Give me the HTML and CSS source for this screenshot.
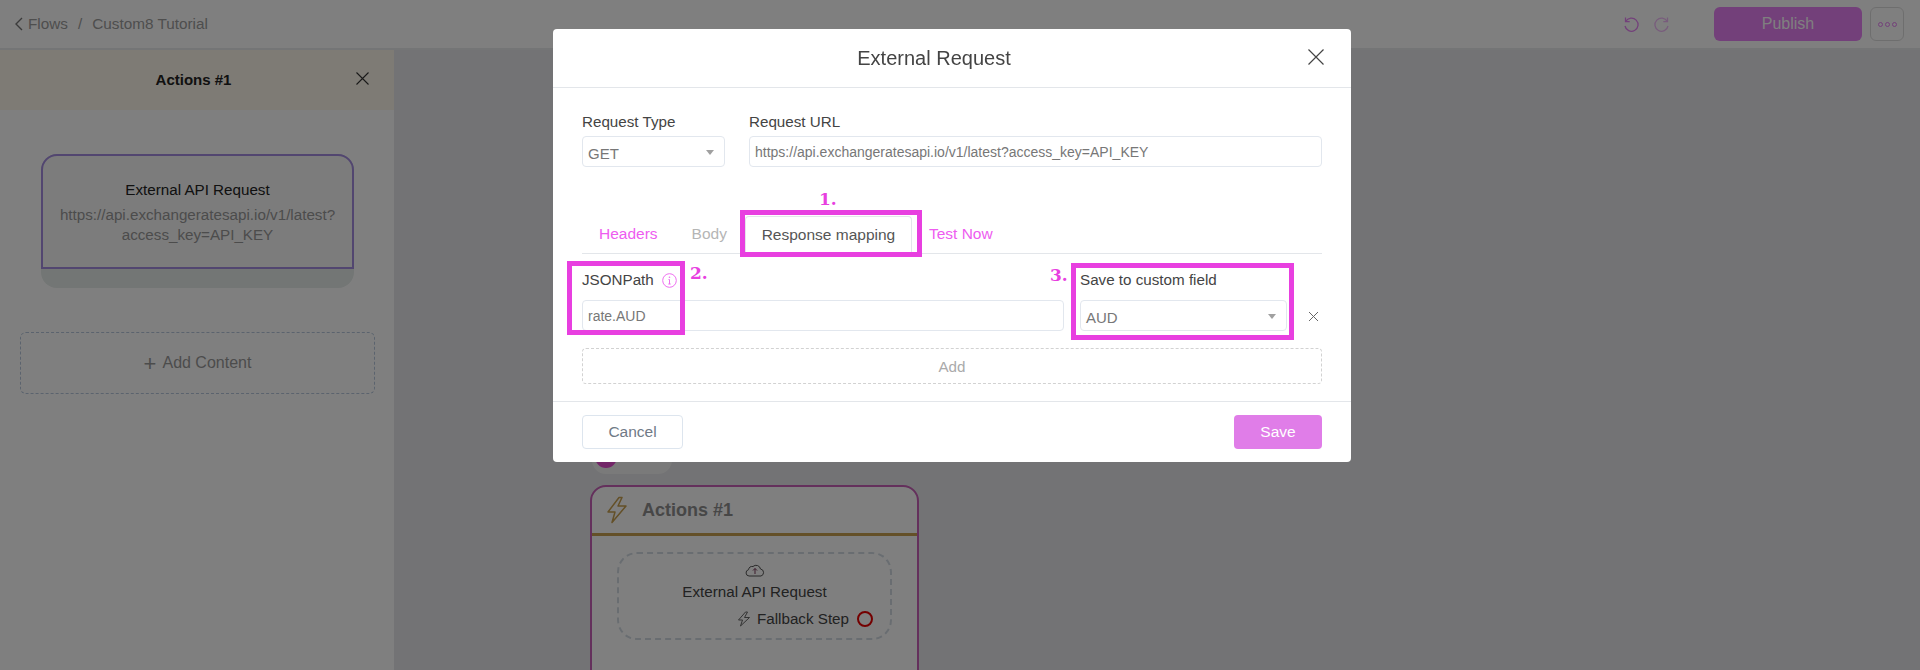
FILE: index.html
```html
<!DOCTYPE html>
<html lang="en">
<head>
<meta charset="utf-8">
<title>External Request</title>
<link rel="stylesheet" href="styles.css">
</head>
<body>
<div class="app">
  <header class="topbar">
    <nav class="crumbs">
      <svg class="chev" width="10" height="14" viewBox="0 0 10 14"><path d="M8 1 2 7l6 6" fill="none" stroke="currentColor" stroke-width="1.4"/></svg>
      <span>Flows</span><span class="sep">/</span><span>Custom8 Tutorial</span>
    </nav>
    <div class="top-actions">
      <svg class="undo" width="18" height="18" viewBox="0 0 18 18"><path d="M3.5 2.5v4.2h4.2M3.7 6.5A6.6 6.6 0 1 1 3 11" fill="none" stroke="currentColor" stroke-width="1.3"/></svg>
      <svg class="redo" width="18" height="18" viewBox="0 0 18 18"><path d="M14.5 2.5v4.2h-4.2M14.3 6.5A6.6 6.6 0 1 0 15 11" fill="none" stroke="currentColor" stroke-width="1.3"/></svg>
      <button class="publish">Publish</button>
      <button class="more"><i></i><i></i><i></i></button>
    </div>
  </header>
  <div class="workspace">
    <aside class="panel">
      <div class="panel-head">
        <strong>Actions #1</strong>
        <svg class="panel-x" width="13" height="13" viewBox="0 0 13 13"><path d="M.5.5l12 12M12.500.5l-12 12" stroke="currentColor" stroke-width="1.100"/></svg>
      </div>
      <div class="panel-body">
        <div class="card-wrap">
          <div class="card">
            <div class="card-title">External API Request</div>
            <div class="card-url">https://api.exchangeratesapi.io/v1/latest?<br>access_key=API_KEY</div>
          </div>
        </div>
        <div class="add-content"><span class="plus">+</span> Add Content</div>
      </div>
    </aside>
    <main class="canvas">
      <div class="pill"><b></b></div>
      <section class="node">
        <div class="node-head">
          <svg width="22" height="28" viewBox="0 0 22 28"><path d="M13 1.500 2 16h7l-3 10.500L20 10h-8l4-8.500z" fill="none" stroke="#c8a050" stroke-width="1.500" stroke-linejoin="round"/></svg>
          <strong>Actions #1</strong>
        </div>
        <div class="node-inner">
          <svg class="cloud" width="20" height="14" viewBox="0 0 20 14"><path d="M5 13H4a3.200 3.200 0 0 1-.5-6.300A4 4 0 0 1 8 3.500 4.500 4.500 0 0 1 15.500 6a3.600 3.600 0 0 1 .5 7z" fill="none" stroke="#555" stroke-width="1"/><path d="M10 11V5.500M8 7.500l2-2 2 2" fill="none" stroke="#7a3a5a" stroke-width="1"/></svg>
          <div class="node-text">External API Request</div>
          <div class="fallback">
            <svg width="14" height="16" viewBox="0 0 14 16"><path d="M8.500 1 1.500 9h4l-2 6L12.500 6.500h-5l3-5.500z" fill="none" stroke="#666" stroke-width="1"/></svg>
            <span>Fallback Step</span><i class="ring"></i>
          </div>
        </div>
      </section>
    </main>
  </div>
</div>

<div class="overlay">
  <div class="modal">
    <div class="modal-head">
      <h2>External Request</h2>
      <svg class="modal-x" width="16" height="16" viewBox="0 0 16 16"><path d="M.5.5l15 15M15.500.5l-15 15" stroke="#444" stroke-width="1.200"/></svg>
    </div>
    <div class="modal-body">
      <div class="req-row">
        <div class="req-type">
          <label>Request Type</label>
          <div class="field select"><span>GET</span><i class="caret"></i></div>
        </div>
        <div class="req-url">
          <label>Request URL</label>
          <div class="field url">https://api.exchangeratesapi.io/v1/latest?access_key=API_KEY</div>
        </div>
      </div>
      <div class="tabs">
        <span class="tab link">Headers</span>
        <span class="tab muted">Body</span>
        <span class="tab active">Response mapping</span>
        <span class="tab link test">Test Now</span>
      </div>
      <div class="map-row">
        <div class="map-path">
          <label>JSONPath <svg class="info" width="15" height="15" viewBox="0 0 15 15"><circle cx="7.500" cy="7.500" r="6.800" fill="none" stroke="#ee6ff0" stroke-width="1"/><path d="M7.500 6.500v4.500M6.300 11h2.400M6.500 6.500h1" fill="none" stroke="#ee6ff0" stroke-width="1"/><circle cx="7.500" cy="4.200" r=".8" fill="#ee6ff0"/></svg></label>
          <div class="field">rate.AUD</div>
        </div>
        <div class="map-save">
          <label>Save to custom field</label>
          <div class="field select"><span>AUD</span><i class="caret"></i></div>
        </div>
        <svg class="row-x" width="11" height="11" viewBox="0 0 11 11"><path d="M1 1l9 9M10 1l-9 9" stroke="#666" stroke-width="1"/></svg>
      </div>
      <div class="add-row">Add</div>
    </div>
    <div class="modal-foot">
      <button class="btn-cancel">Cancel</button>
      <button class="btn-save">Save</button>
    </div>

    <div class="mark mark-tab"></div>
    <div class="mark mark-path"></div>
    <div class="mark mark-save"></div>
    <span class="num num-1">1.</span>
    <span class="num num-2">2.</span>
    <span class="num num-3">3.</span>
  </div>
</div>
</body>
</html>
```
FILE: styles.css
```css
* { box-sizing: border-box; }
html, body { margin: 0; height: 100%; overflow: hidden; }
body { font-family: "Liberation Sans", Arial, sans-serif; color: #333; background: #e6e7ea; }
label { display: block; }
button { font-family: inherit; }

.app { height: 670px; display: flex; flex-direction: column; }
.topbar { height: 50px; flex: none; background: #fff; border-bottom: 2px solid #e9eaec; display: flex; align-items: center; justify-content: space-between; padding: 0 16px 0 14px; }
.crumbs { display: flex; align-items: center; font-size: 15.300px; color: #9c9c9c; }
.chev { margin-right: 4px; color: #777; }
.sep { margin: 0 10px; }
.top-actions { display: flex; align-items: center; color: #e680f4; }
.undo { margin-right: 13px; }
.redo { margin-right: 43px; opacity: .55; }
.publish { width: 148px; height: 34px; border: 0; border-radius: 6px; background: #e680f4; color: #ffffff; font-size: 16px; }
.more { width: 34px; height: 34px; margin-left: 8px; background: #fff; border: 1px solid #ddd; border-radius: 6px; display: flex; align-items: center; justify-content: center; gap: 2px; padding: 0; }
.more i { width: 5px; height: 5px; border: 1px solid #e680f4; border-radius: 50%; }

.workspace { flex: 1; display: flex; min-height: 0; }
.panel { width: 394px; flex: none; background: #fff; }
.panel-head { height: 60px; background: #fdf7ea; position: relative; display: flex; align-items: center; justify-content: center; font-size: 15px; }
.panel-head strong { color: #222; margin-right: 7px; margin-top: -1px; }
.panel-x { position: absolute; left: 356px; top: 22px; color: #333; }
.panel-body { padding: 44px 19px 0 20px; }
.card-wrap { margin: 0 21px 0 21px; height: 134px; background: #e6ecea; border-radius: 16px; }
.card { height: 115px; border: 2px solid #a48ce0; border-radius: 16px 16px 0 0; text-align: center; padding-top: 24px; background: #f8f8f8; }
.card-title { font-size: 15.200px; color: #222; line-height: 20px; }
.card-url { font-size: 15.200px; color: #999; line-height: 20px; margin-top: 5px; }
.add-content { margin-top: 44px; height: 62px; width: 355px; border: 1px dashed #b6c7dc; border-radius: 6px; display: flex; align-items: center; justify-content: center; font-size: 16px; color: #999; gap: 6px; }
.plus { font-size: 22px; font-weight: 400; line-height: 1; margin-top: 2px; }

.canvas { flex: 1; position: relative; overflow: hidden; }
.pill { position: absolute; left: 198px; top: 402px; width: 80px; height: 22px; background: #f5f5f5; border-radius: 0 0 14px 14px; }
.pill b { position: absolute; left: 3px; top: -6px; width: 22px; height: 22px; border-radius: 50%; background: #e64dd0; }
.node { position: absolute; left: 196px; top: 435px; width: 329px; height: 300px; background: #fff; border: 2px solid #c860b8; border-radius: 16px 16px 0 0; }
.node-head { height: 49px; border-bottom: 3px solid #c8a050; padding-left: 14px; display: flex; align-items: center; gap: 14px; font-size: 18px; color: #777; }
.node-head strong { color: #8e8e8e; }
.node-inner { margin: 16px 25px 0 25px; height: 88px; border: 2px dashed #d3dbe3; border-radius: 20px; display: flex; flex-direction: column; align-items: center; padding-top: 9px; font-size: 15.200px; color: #444; }
.cloud { display: block; }
.node-text { line-height: 20px; margin-top: 5px; }
.fallback { align-self: flex-end; display: flex; align-items: center; gap: 6px; margin: 7px 17px 0 0; line-height: 20px; }
.ring { width: 16px; height: 16px; border: 2px solid #e80000; border-radius: 50%; margin-left: 2px; }

.overlay { position: fixed; inset: 0; background: rgba(0,0,0,.5); padding: 29px 0 0 553px; }
.modal { position: relative; width: 798px; height: 433px; background: #fff; border-radius: 4px; color: #444; display: flex; flex-direction: column; }
.modal-head { height: 59px; flex: none; border-bottom: 1px solid #e3e6ea; display: flex; align-items: center; justify-content: center; position: relative; padding-right: 36px; }
.modal-head h2 { margin: 0; font-size: 20px; font-weight: 400; color: #444; }
.modal-x { position: absolute; left: 755px; top: 20px; }
.modal-body { flex: 1; padding: 24px 29px 0; }
.field { height: 31px; border: 1px solid #e2e7ee; border-radius: 4px; background: #fff; font-size: 14px; color: #777; padding: 0 5px; display: flex; align-items: center; }
.select { position: relative; font-size: 15px; padding-top: 3px; }
.caret { position: absolute; right: 10px; top: 13px; border: 5px solid transparent; border-top: 5px solid #a0a0a0; border-bottom: 0; border-left-width: 4px; border-right-width: 4px; }
.req-row { display: flex; gap: 24px; font-size: 15.200px; }
.req-row label { line-height: 20px; margin-bottom: 4px; }
.req-type { width: 143px; flex: none; }
.req-url { flex: 1; }
.tabs { margin-top: 43px; height: 44px; border-bottom: 1px solid #e3e6ea; display: flex; align-items: flex-end; font-size: 15.500px; }
.tab { height: 37px; line-height: 35px; }
.tab.link { color: #ee5cf0; }
.tab.muted { color: #b5b5b5; }
.tabs .tab:nth-child(1) { margin-left: 17px; }
.tabs .tab:nth-child(2) { margin-left: 34px; }
.tab.active { margin-left: 18px; width: 167px; text-align: center; border: 1px solid #e3e6ea; border-bottom: 0; border-radius: 4px 4px 0 0; color: #555; background: #fff; }
.tab.test { margin-left: 17px; }
.map-row { display: flex; margin-top: 16px; position: relative; font-size: 15.200px; }
.map-row label { line-height: 20px; margin-bottom: 10px; display: flex; align-items: center; gap: 8px; }
.map-path { width: 482px; flex: none; }
.map-save { width: 207px; flex: none; margin-left: 16px; }
.info { flex: none; }
.row-x { margin: 41px 0 0 21px; flex: none; }
.add-row { margin-top: 17px; height: 36px; border: 1px dashed #d2d2d2; border-radius: 4px; display: flex; align-items: center; justify-content: center; font-size: 15.200px; color: #aaa; }
.modal-foot { height: 61px; flex: none; border-top: 1px solid #e3e6ea; display: flex; justify-content: space-between; align-items: flex-start; padding: 13px 29px 0; }
.btn-cancel, .btn-save { height: 34px; border-radius: 4px; font-size: 15.500px; padding: 0; }
.btn-cancel { width: 101px; border: 1px solid #dde5ee; background: #fff; color: #707a86; }
.btn-save { width: 88px; border: 0; background: #e07de8; color: #fff; }

.mark { position: absolute; border: 5px solid #e83fe0; pointer-events: none; }
.mark-tab { left: 187px; top: 181px; width: 182px; height: 47px; }
.mark-path { left: 14px; top: 232px; width: 118px; height: 74px; }
.mark-save { left: 518px; top: 234px; width: 223px; height: 77px; }
.num { position: absolute; font-family: "DejaVu Serif", serif; font-weight: 700; font-size: 17px; line-height: 18px; color: #e83fe0; }
.num-1 { left: 266px; top: 161px; }
.num-2 { left: 137px; top: 235px; }
.num-3 { left: 497px; top: 237px; }
```
